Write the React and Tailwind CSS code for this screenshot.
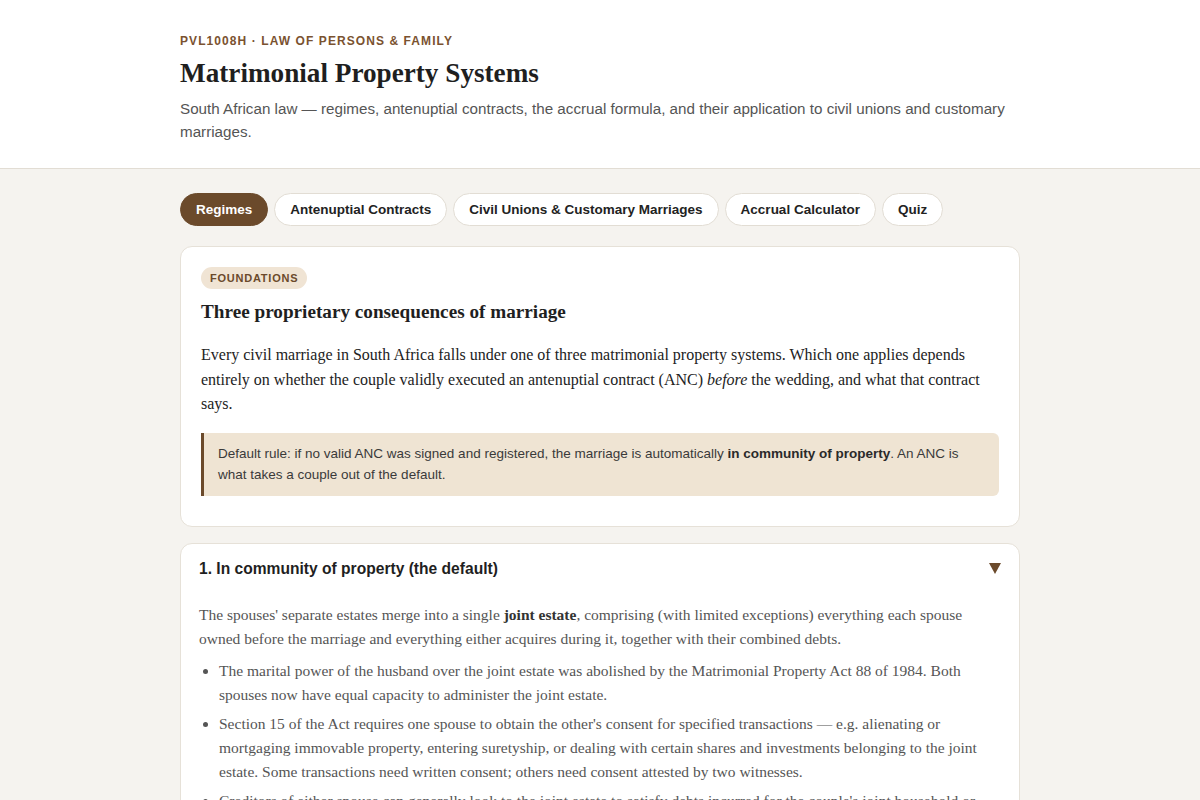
import React from "react";

const sans = { fontFamily: '"Liberation Sans", Arial, sans-serif' };
const serif = { fontFamily: '"Liberation Serif", "Times New Roman", serif' };

export default function App() {
  const tabs = ["Regimes", "Antenuptial Contracts", "Civil Unions & Customary Marriages", "Accrual Calculator", "Quiz"];
  return (
    <div className="min-h-screen bg-[#f5f3ef] text-[#222]" style={sans}>
      <header className="bg-white border-b border-[#e2ddd4]">
        <div className="max-w-[840px] mx-auto pt-[33px] pb-[25px]">
          <div className="text-[12px] leading-4 font-bold tracking-[0.09em] uppercase text-[#7a5230]">
            PVL1008H · Law of Persons &amp; Family
          </div>
          <h1 className="mt-[7px] text-[27.2px] leading-[34px] font-bold text-[#1f1f1f]" style={serif}>
            Matrimonial Property Systems
          </h1>
          <p className="mt-[7px] text-[15.2px] leading-[23px] text-[#555]">
            South African law — regimes, antenuptial contracts, the accrual formula, and their application to civil unions and customary marriages.
          </p>
        </div>
      </header>

      <main className="max-w-[840px] mx-auto pt-6">
        <nav className="flex gap-1.5">
          {tabs.map((t, i) => (
            <button
              key={t}
              className={
                "rounded-full border px-[15px] py-[7px] text-[13.5px] leading-[17px] font-bold " +
                (i === 0
                  ? "bg-[#6b4a2b] border-[#6b4a2b] text-white"
                  : "bg-white border-[#e2ddd4] text-[#222]")
              }
            >
              {t}
            </button>
          ))}
        </nav>

        <section className="mt-5 bg-white border border-[#e6e1d8] rounded-xl px-5 pt-5 pb-[30px]">
          <div className="w-fit rounded-full bg-[#f0e4d4] px-[9px] py-1 text-[11px] leading-[14px] font-bold tracking-[0.07em] text-[#6b4a2b]">
            FOUNDATIONS
          </div>
          <h2 className="mt-[10px] text-[19.2px] leading-[26px] font-bold text-[#1f1f1f]" style={serif}>
            Three proprietary consequences of marriage
          </h2>
          <p className="mt-[18px] text-[16px] leading-[24.5px] text-[#222]" style={serif}>
            Every civil marriage in South Africa falls under one of three matrimonial property systems. Which one applies depends entirely on whether the couple validly executed an antenuptial contract (ANC) <em>before</em> the wedding, and what that contract says.
          </p>
          <div className="mt-4 bg-[#efe4d3] border-l-[3px] border-[#6b4a2b] rounded-r-md px-[14px] py-[10.5px] text-[13.5px] leading-[21px] text-[#3a3a3a]">
            Default rule: if no valid ANC was signed and registered, the marriage is automatically <strong className="text-[#2a2a2a]">in community of property</strong>. An ANC is what takes a couple out of the default.
          </div>
        </section>

        <section className="mt-4 bg-white border border-[#e6e1d8] rounded-xl">
          <div className="flex items-center justify-between px-[18px] pt-[13px] pb-3">
            <h3 className="text-[15.6px] leading-6 font-bold text-[#1f1f1f]">1. In community of property (the default)</h3>
            <svg width="12" height="11" viewBox="0 0 12 11" aria-hidden="true">
              <polygon points="0,0 12,0 6,11" fill="#6b4a2b" />
            </svg>
          </div>
          <div className="px-[18px] pt-[10px] pb-5 text-[15.5px] leading-6 text-[#555]" style={serif}>
            <p>
              The spouses' separate estates merge into a single <strong className="text-[#333]">joint estate</strong>, comprising (with limited exceptions) everything each spouse owned before the marriage and everything either acquires during it, together with their combined debts.
            </p>
            <ul className="mt-2 pl-5 list-disc flex flex-col gap-[5px]">
              <li>The marital power of the husband over the joint estate was abolished by the Matrimonial Property Act 88 of 1984. Both spouses now have equal capacity to administer the joint estate.</li>
              <li>Section 15 of the Act requires one spouse to obtain the other's consent for specified transactions — e.g. alienating or mortgaging immovable property, entering suretyship, or dealing with certain shares and investments belonging to the joint estate. Some transactions need written consent; others need consent attested by two witnesses.</li>
              <li>Creditors of either spouse can generally look to the joint estate to satisfy debts incurred for the couple's joint household or other obligations, subject to the statutory protections.</li>
            </ul>
          </div>
        </section>
      </main>
    </div>
  );
}
